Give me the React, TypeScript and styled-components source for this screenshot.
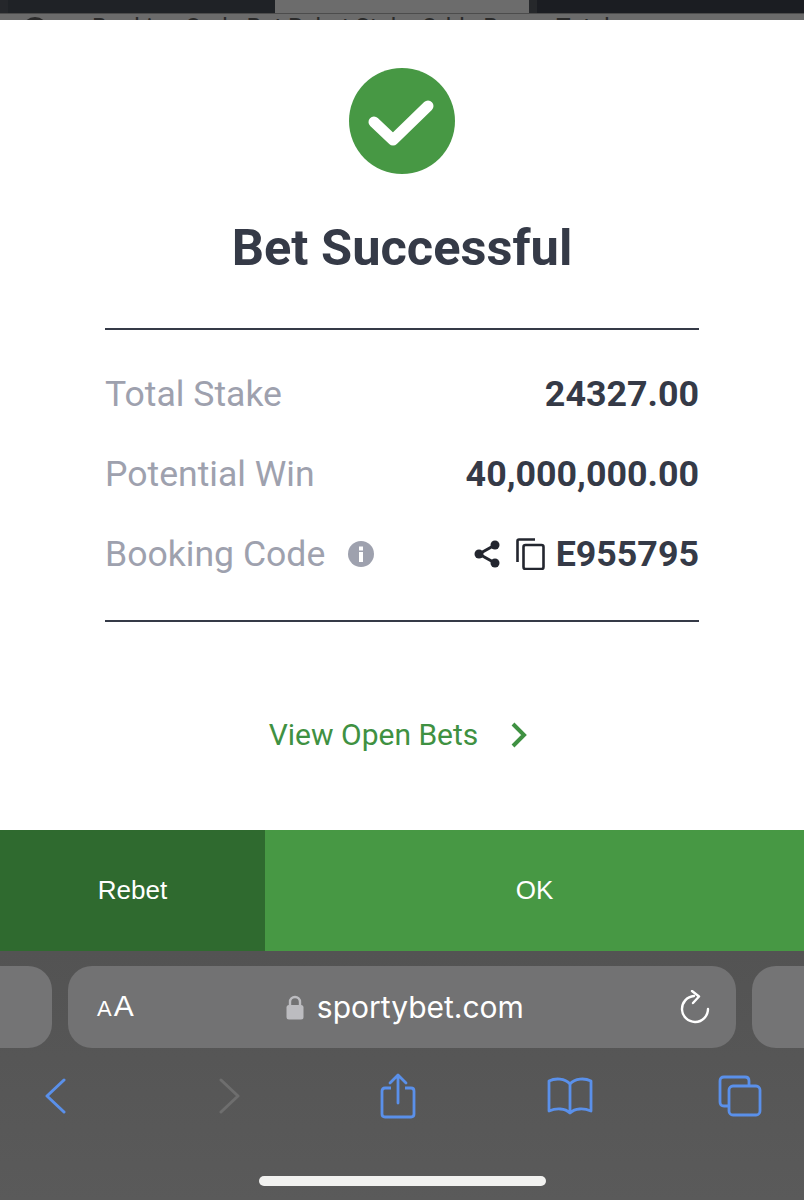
import React, { FC } from 'react';
import styled, { createGlobalStyle } from 'styled-components';

const GlobalStyle = createGlobalStyle`
    html, body {
        margin: 0;
        padding: 0;
        background: #fff;
    }
`;

const Page = styled.div`
    width: 804px;
    height: 1200px;
    display: flex;
    flex-direction: column;
    overflow: hidden;
    font-family: Roboto, Arial, sans-serif;
`;

const TopTabs = styled.div`
    height: 13px;
    display: grid;
    grid-template-columns: 8px 167px 100px 254px 8px 1fr;
    background: #1d1f23;
`;

const TopTab = styled.div<{ $shade: string }>`
    background: ${(p) => p.$shade};
`;

const PeekRow = styled.div`
    height: 7px;
    box-sizing: border-box;
    border-top: 1px solid #4c4c4c;
    background: #6b6b6b;
    overflow: hidden;
    display: flex;
    padding: 3px 0 0 22px;
    color: #2b2b2b;
    font-size: 24px;
    line-height: 20px;
    white-space: nowrap;
`;

const PeekIcon = styled.div`
    flex: none;
    width: 20px;
    height: 20px;
    margin-right: 44px;
    border: 3px solid #2b2b2b;
    border-radius: 50%;
`;

const Modal = styled.div`
    height: 810px;
    background: #fff;
    display: flex;
    flex-direction: column;
    align-items: center;
`;

const SuccessBadge = styled.svg`
    width: 106px;
    height: 106px;
    margin-top: 48px;
    display: block;
`;

const Title = styled.h1`
    margin: 46px 0 0;
    font-size: 50.6px;
    line-height: 56px;
    font-weight: 700;
    color: #353a47;
`;

const Details = styled.div`
    width: 594px;
    margin-top: 52px;
    padding: 44px 0 46px;
    border-top: 2px solid #353a47;
    border-bottom: 2px solid #353a47;
    display: flex;
    flex-direction: column;
    gap: 40px;
`;

const Row = styled.div`
    height: 40px;
    display: flex;
    justify-content: space-between;
    align-items: center;
`;

const Label = styled.span`
    display: flex;
    align-items: center;
    gap: 23px;
    font-size: 35.6px;
    color: #9ea1ae;
`;

const Value = styled.span`
    display: flex;
    align-items: center;
    font-size: 35.8px;
    font-weight: 700;
    color: #353a47;
`;

const ActionIcon = styled.svg<{ $gap: number }>`
    display: block;
    margin-right: ${(p) => p.$gap}px;
`;

const OpenBets = styled.a`
    margin-top: 93px;
    padding-right: 8px;
    display: flex;
    align-items: center;
    gap: 32px;
    font-size: 30px;
    line-height: 40px;
    color: #3f9142;
`;

const Buttons = styled.div`
    height: 121px;
    display: grid;
    grid-template-columns: 265px 1fr;
`;

const ActionButton = styled.button<{ $dark?: boolean }>`
    border: 0;
    padding: 0;
    font-family: Arial, "Liberation Sans", sans-serif;
    font-size: 26px;
    color: #fff;
    background: ${(p) => (p.$dark ? '#2f6a2f' : '#479844')};
`;

const Toolbar = styled.div`
    flex: 1;
    background: linear-gradient(#535353, #5a5a5a);
    display: flex;
    flex-direction: column;
`;

const PillRow = styled.div`
    margin-top: 15px;
    height: 82px;
    display: grid;
    grid-template-columns: 52px 668px 52px;
    gap: 16px;
`;

const SidePill = styled.div<{ $side: 'left' | 'right' }>`
    background: #747475;
    border-radius: ${(p) => (p.$side === 'left' ? '0 24px 24px 0' : '24px 0 0 24px')};
`;

const AddressPill = styled.div`
    background: #727273;
    border-radius: 24px;
    display: flex;
    align-items: center;
    justify-content: space-between;
    padding: 0 26px 0 29px;
    color: #fff;
    font-family: Inter, Arial, sans-serif;
`;

const TextSize = styled.span`
    font-size: 30px;
    line-height: 36px;
    display: flex;
    align-items: baseline;
    font-family: Arial, "Liberation Sans", sans-serif;
`;

const SmallA = styled.span`
    font-size: 22px;
    margin-right: 2px;
`;

const Domain = styled.span`
    display: flex;
    align-items: center;
    gap: 13px;
    margin-right: 4px;
    font-size: 30px;
`;

const NavRow = styled.div`
    margin-top: 23px;
    display: grid;
    grid-template-columns: 175px 161px 167px 171px auto;
    padding-left: 44px;
    align-items: center;
    height: 50px;
`;

const NavSlot = styled.div`
    display: flex;
    justify-content: flex-start;
`;

const HomeIndicator = styled.div`
    width: 287px;
    height: 10px;
    margin: 55px auto 0;
    border-radius: 5px;
    background: #f2f2f0;
`;

const BLUE = '#5a90ea';

const App: FC = () => {
    return (
        <Page>
            <GlobalStyle/>
            <TopTabs>
                <TopTab $shade="#25272b"/>
                <TopTab $shade="#1f2226"/>
                <TopTab $shade="#1f2226"/>
                <TopTab $shade="#6c6c6c"/>
                <TopTab $shade="#26282b"/>
                <TopTab $shade="#1b1d22"/>
            </TopTabs>
            <PeekRow>
                <PeekIcon/>
                <span>Booking Code Bet Rebet Stake Odds Bonus Total</span>
            </PeekRow>
            <Modal>
                <SuccessBadge viewBox="0 0 106 106">
                    <circle cx="53" cy="53" r="53" fill="#479844"/>
                    <path d="M25 54 L44 72 L79 38" fill="none" stroke="#fff" strokeWidth="11" strokeLinecap="round" strokeLinejoin="round"/>
                </SuccessBadge>
                <Title>Bet Successful</Title>
                <Details>
                    <Row>
                        <Label>Total Stake</Label>
                        <Value>24327.00</Value>
                    </Row>
                    <Row>
                        <Label>Potential Win</Label>
                        <Value>40,000,000.00</Value>
                    </Row>
                    <Row>
                        <Label>
                            Booking Code
                            <svg width="26" height="26" viewBox="0 0 26 26">
                                <circle cx="13" cy="13" r="13" fill="#9ea1ae"/>
                                <rect x="11" y="11" width="4" height="10" fill="#fff"/>
                                <rect x="11" y="5.5" width="4" height="4" fill="#fff"/>
                            </svg>
                        </Label>
                        <Value>
                            <ActionIcon $gap={15} width="28" height="30" viewBox="0 0 28 30">
                                <path d="M22 6 L6 15 L22 24" fill="none" stroke="#23262f" strokeWidth="3"/>
                                <circle cx="22" cy="6" r="4.5" fill="#23262f"/>
                                <circle cx="6" cy="15" r="4.5" fill="#23262f"/>
                                <circle cx="22" cy="24" r="4.5" fill="#23262f"/>
                            </ActionIcon>
                            <ActionIcon $gap={11} width="29" height="32" viewBox="0 0 29 32">
                                <path d="M1.5 24 V3 Q1.5 1.5 3 1.5 H19" fill="none" stroke="#23262f" strokeWidth="2.6"/>
                                <rect x="7.5" y="7" width="20" height="24" rx="2" fill="none" stroke="#23262f" strokeWidth="2.6"/>
                            </ActionIcon>
                            E955795
                        </Value>
                    </Row>
                </Details>
                <OpenBets>
                    View Open Bets
                    <svg width="17" height="26" viewBox="0 0 17 26">
                        <path d="M3 2 L14 13 L3 24" fill="none" stroke="#3f9142" strokeWidth="4"/>
                    </svg>
                </OpenBets>
            </Modal>
            <Buttons>
                <ActionButton $dark>Rebet</ActionButton>
                <ActionButton>OK</ActionButton>
            </Buttons>
            <Toolbar>
                <PillRow>
                    <SidePill $side="left"/>
                    <AddressPill>
                        <TextSize><SmallA>A</SmallA>A</TextSize>
                        <Domain>
                            <svg width="18" height="25" viewBox="0 0 18 25">
                                <path d="M4 11 V7 a5 5 0 0 1 10 0 V11" fill="none" stroke="#bcbcc0" strokeWidth="2.4"/>
                                <rect x="0.5" y="10" width="17" height="14.5" rx="2.5" fill="#bcbcc0"/>
                            </svg>
                            sportybet.com
                        </Domain>
                        <svg width="30" height="34" viewBox="0 0 30 34">
                            <path d="M14 6 A13 13 0 1 0 28 19" fill="none" stroke="#fff" strokeWidth="2.4" strokeLinecap="round"/>
                            <path d="M12 1 L19 6.5 L13 13" fill="none" stroke="#fff" strokeWidth="2.4" strokeLinecap="round" strokeLinejoin="round"/>
                        </svg>
                    </AddressPill>
                    <SidePill $side="right"/>
                </PillRow>
                <NavRow>
                    <NavSlot>
                        <svg width="22" height="36" viewBox="0 0 22 36">
                            <path d="M20 2 L3 18 L20 34" fill="none" stroke={BLUE} strokeWidth="3" strokeLinecap="round" strokeLinejoin="round"/>
                        </svg>
                    </NavSlot>
                    <NavSlot>
                        <svg width="22" height="36" viewBox="0 0 22 36">
                            <path d="M2 2 L19 18 L2 34" fill="none" stroke="#6e6e6e" strokeWidth="3" strokeLinecap="round" strokeLinejoin="round"/>
                        </svg>
                    </NavSlot>
                    <NavSlot>
                        <svg width="36" height="46" viewBox="0 0 36 46">
                            <path d="M11 15 H5 Q2 15 2 18 V41 Q2 44 5 44 H31 Q34 44 34 41 V18 Q34 15 31 15 H25" fill="none" stroke={BLUE} strokeWidth="2.8"/>
                            <path d="M18 30 V3 M10 10 L18 2 L26 10" fill="none" stroke={BLUE} strokeWidth="2.8" strokeLinecap="round" strokeLinejoin="round"/>
                        </svg>
                    </NavSlot>
                    <NavSlot>
                        <svg width="46" height="38" viewBox="0 0 46 38">
                            <path d="M23 7 C18 1 8 1 2 4 V34 C9 31 18 31 23 36 C28 31 37 31 44 34 V4 C38 1 28 1 23 7 Z M23 7 V36" fill="none" stroke={BLUE} strokeWidth="2.8" strokeLinejoin="round"/>
                        </svg>
                    </NavSlot>
                    <NavSlot>
                        <svg width="44" height="42" viewBox="0 0 44 42">
                            <path d="M10 31 H6 Q2 31 2 27 V6 Q2 2 6 2 H27 Q31 2 31 6 V10" fill="none" stroke={BLUE} strokeWidth="2.8"/>
                            <rect x="11" y="11" width="31" height="29" rx="4" fill="none" stroke={BLUE} strokeWidth="2.8"/>
                        </svg>
                    </NavSlot>
                </NavRow>
                <HomeIndicator/>
            </Toolbar>
        </Page>
    );
};

export default App;
